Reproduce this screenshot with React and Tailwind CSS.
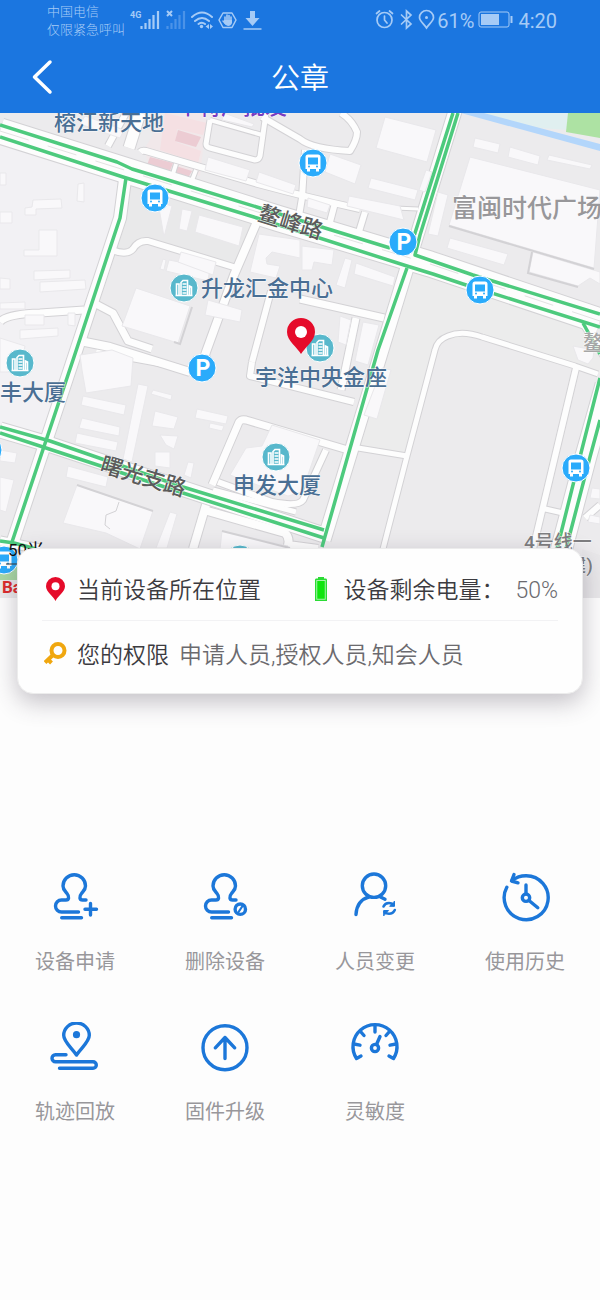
import React from 'react';

const roads = [
  // side streets, [path, width]
  ['M126 113 L108 146', 6],
  ['M140 113 L129 148', 11],
  ['M210 120 L206 144 Q206 147 210 148 L255 160 Q259 160 260 156 L266 113', 5],
  ['M210 120 L262 135', 4],
  ['M140 152 Q142 150 146 151 L258 184 Q310 198 360 209', 6],
  ['M176 164 L172 177', 4],
  ['M196 170 L191 183', 4],
  ['M262 117 L300 139 Q312 149 350 151 Q357 140 357 132 Q352 120 341 113', 6],
  ['M305 150 L302 198 L299 216', 6],
  ['M335 203 L330 222', 6],
  ['M365 212 L358 235', 6],
  ['M395 208 L418 209', 3],
  ['M112 250 Q127 256 133 249 Q138 240 148 241 L240 269', 6],
  ['M256 224 L234 275 L206 352 L200 372', 8],
  ['M271 291 L252 362', 6],
  ['M0 322 Q6 314 40 313 L84 310', 7],
  ['M94 303 L113 313 L128 341 L152 349', 7],
  ['M80 341 L110 347 L190 372', 8],
  ['M96 352 L178 367', 5],
  ['M300 299 L384 318', 7],
  ['M356 318 L341 390', 7],
  ['M252 362 L250 376 L354 402', 6],
  ['M212 485 L239 422 Q241 419 246 420 L348 450', 7],
  ['M218 482 L272 502 Q298 507 303 500 L326 450', 6],
  ['M213 490 L296 512', 5],
  ['M206 505 L193 549', 8],
  ['M204 510 L285 533 Q290 538 288 545 L318 549', 8],
  ['M352 447 L407 456', 5],
  ['M383 549 L407 456 L435 350 Q437 340 448 336 Q462 330 482 337 L575 366 L598 374', 5],
  ['M576 368 L533 549', 6],
  ['M541 508 L563 513', 5],
  ['M585 518 L600 505', 6],
];

const mainRoads = [
  ['M0 131 L118 168 L280 219 L430 264 L600 321', 25],
  ['M456 108 L410 258 L324 540', 13],
  ['M126 172 L120 218 L73 360 L10 550', 12],
  ['M0 430 L48 444 L324 535', 15],
  ['M606 385 L586 456 L560 555', 21],
  ['M582 320 L606 358', 8],
  ['M0 541 L40 549', 9],
];

const greenLines = [
  'M0 125 L117 162 L132 169 L260 208 L390 248',
  'M0 137 L123 177 L257 218 L407 266 L433 274 L463 284 L600 327',
  'M453 113 L415 233 L410 246',
  'M458 113 L420 235 L415 255 L473 275 L600 314',
  'M407 268 L378 350 L322 547',
  'M126 178 L120 218 L73 360 L12 542',
  'M0 427 L50 441 L102 459 L183 487 L324 530',
  'M0 433 L43 447 L183 493 L324 538',
  'M600 378 L581 453 L557 549',
  'M600 420 L590 457 L566 549',
  'M583 323 L600 354',
  'M0 541 L14 543 L36 549',
];

const buildings = [
  '0,173 6,173 6,185 0,185',
  '78,184 84,183 84,202 77,201',
  '33,200 61,199 62,208 36,209 36,215 25,215 25,208 32,207',
  '0,212 12,212 12,223 0,223',
  '39,230 57,230 57,256 24,256 24,250 39,250',
  '34,271 70,270 70,278 34,280',
  '40,282 85,280 86,289 40,292',
  '0,278 10,279 10,289 0,289',
  '0,303 25,302 25,309 0,309',
  '25,315 44,315 44,325 25,325',
  '68,313 75,313 75,326 68,325',
  '20,330 58,328 58,336 20,339',
  '0,338 25,346 20,372 0,372',
  '182,209 192,211 187,231 179,229',
  '199,215 243,227 239,246 195,232',
  '158,202 172,206 164,237',
  '163,259 166,260 164,270 160,269',
  '169,260 210,268 208,281 166,271',
  '181,252 216,262 213,275 178,262',
  '136,288 190,306 178,343 122,326',
  '208,300 242,310 240,322 205,315',
  '259,234 300,240 300,258 272,252 266,258 267,264 280,266 276,278 250,272',
  '302,246 334,250 332,265 314,262 312,270 302,270',
  '345,258 352,260 345,288 336,285',
  '356,263 395,277 393,286 354,274',
  '208,157 250,170 246,181 205,170',
  '259,172 296,185 293,194 256,182',
  '224,113 254,124 252,127 222,120',
  '85,116 124,130 120,138 80,124',
  '385,117 436,130 427,162 376,148',
  '330,154 361,165 355,184 325,172',
  '371,178 418,190 415,200 368,188',
  '349,196 400,206 404,220 347,206',
  '438,192 448,195 438,236 428,234',
  '426,170 432,172 425,192 419,190',
  '308,198 330,205 327,213 307,207',
  '475,138 500,144 498,153 473,147',
  '510,147 540,156 538,165 508,157',
  '549,155 592,165 590,169 547,160',
  '470,157 600,190 594,268 449,225',
  '450,238 508,254 504,265 447,248',
  '533,252 600,272 600,284 590,278 578,286 529,272',
  '573,346 594,350 593,358 588,364 578,360',
  '80,355 112,350 133,358 131,386 86,393 82,370',
  '83,396 126,405 124,415 81,405',
  '82,418 120,427 119,436 79,428',
  '77,433 118,442 116,451 75,443',
  '138,384 148,386 132,462 123,459',
  '153,390 172,395 171,400 151,394',
  '155,411 178,417 174,429 152,426',
  '160,435 178,436 174,449 166,445',
  '155,452 170,452 170,468 155,466',
  '197,409 228,416 226,424 195,418',
  '210,423 224,426 222,431 209,428',
  '188,462 194,463 191,478 184,475',
  '246,448 262,446 272,425 320,440 302,492 288,496 230,475',
  '77,485 153,511 140,549 106,533 63,523',
  '68,466 108,477 106,487 66,477',
  '170,512 177,514 167,548 156,548',
  '0,450 17,453 15,463 0,461',
  '0,477 14,480 6,512 0,510',
  '222,531 288,546 286,549 220,549',
  '340,316 351,320 346,345 338,342',
  '363,322 379,325 368,365 355,361',
  '382,368 391,370 377,419 364,415',
  '592,488 600,489 600,499 590,498',
  '590,515 600,517 600,524 588,522',
];

const BusStop = ({ x, y }) => (
  <g transform={`translate(${x} ${y})`}>
    <circle r="14" fill="#2aabfb" stroke="#fff" strokeWidth="1" />
    <path d="M-5 -8.500 H5 Q7.500 -8.500 7.500 -6 V6 H6 V8.500 H3 V6 H-3 V8.500 H-6 V6 H-7.500 V-6 Q-7.500 -8.500 -5 -8.500Z" fill="#fff" />
    <rect x="-5" y="-5.500" width="10" height="7" fill="#2aabfb" />
    <circle cx="-4" cy="3.500" r="1" fill="#2aabfb" />
    <circle cx="4" cy="3.500" r="1" fill="#2aabfb" />
  </g>
);

const Parking = ({ x, y }) => (
  <g transform={`translate(${x} ${y})`}>
    <circle r="14" fill="#2aabfb" stroke="#fff" strokeWidth="1" />
    <text x="1" y="8" textAnchor="middle" fontSize="23" fontWeight="700" fill="#fff">P</text>
  </g>
);

const Building = ({ x, y }) => (
  <g transform={`translate(${x} ${y})`}>
    <circle r="14" fill="#58b8cc" stroke="#fff" strokeWidth="1" />
    <path d="M-7.500 7 V-4 H-5 V7 M-3 7 V-5.500 L-1 -7.500 H3.500 V7 M5.500 7 V-2 L7.500 -1 V7 M-8.500 7.500 H8.500" fill="none" stroke="#fff" strokeWidth="1.600" />
    <path d="M-1.500 -4 H2.500 M-1.500 -1 H2.500 M-1.500 2 H2.500 M-1.500 5 H2.500" stroke="#fff" strokeWidth="1.400" />
  </g>
);

const mapLabel = {
  fontWeight: 500,
  stroke: '#ffffffcc',
  strokeWidth: 1,
  strokeLinejoin: 'round',
  paintOrder: 'stroke',
};

const DeviceMap = () => (
  <svg
    className="block h-[485px] w-full bg-[#ecebed]"
    viewBox="0 113 600 485"
    preserveAspectRatio="xMidYMin slice"
    role="img"
    aria-label="设备位置地图"
  >
    {/* land areas */}
    <path d="M126 178 L256 215 L234 270 L148 243 L133 252 L115 247Z" fill="#e9e9ea" />
    <path d="M0 140 L122 178 L118 218 L75 350 L48 440 L0 428Z" fill="#f2f1f4" />
    <path d="M407 268 L600 330 V374 L482 337 L440 340 L405 456 L350 447Z" fill="#ececec" />
    <path d="M145 148 L166 113 H207 L200 176 L147 160Z" fill="#f1e8ea" />
    <path d="M165 113 L207 123 L203 135 L177 129 L176 142 L201 151 L198 163 L160 150Z" fill="#f5e0e3" />
    <path d="M178 130 L201 137 L196 147 L175 141Z M150 157 L173 163 L170 171 L147 165Z M176 166 L192 171 L188 178 L173 174Z" fill="#ecccd3" />
    <path d="M470 113 H568 V130 L540 128Z" fill="#e0eff0" />
    <path d="M568 113 H600 V138 L566 132Z" fill="#ade2a3" />
    <path d="M461 113 H484 L600 144 V151Z" fill="#b3d6fb" />
    <path d="M0 556 H18 V580 H0Z" fill="#a9d8a4" />
    <path d="M582 549 L600 555 V598 H582Z" fill="#e9e8ea" />

    <g fill="none" strokeLinejoin="round">
      {roads.map(([d, w]) => <path key={d} d={d} stroke="#d3d2d5" strokeWidth={w + 2} />)}
      {mainRoads.map(([d, w]) => <path key={d} d={d} stroke="#d3d2d5" strokeWidth={w + 2} />)}
      {roads.map(([d, w]) => <path key={d} d={d} stroke="#fdfdfd" strokeWidth={w} />)}
      {mainRoads.map(([d, w]) => <path key={d} d={d} stroke="#fdfdfd" strokeWidth={w} />)}
    </g>
    <path d="M0 131 L118 168 L280 219 L430 264 L600 321" fill="none" stroke="#e2e2e2" strokeWidth="1" strokeDasharray="30 20" />

    <g fill="#f9f8fa" stroke="#e9e8eb" strokeWidth="1">
      {buildings.map((points) => <polygon key={points} points={points} />)}
    </g>
    <g fill="none" stroke="#d3d2d5" strokeWidth="2">
      <path d="M192 307 L180 344 L174 342" />
      <path d="M77 485 L153 511" />
      <path d="M532 252 L528 273 L578 287" />
      <path d="M449 226 L594 269" />
      <path d="M222 531 L290 548" />
      <path d="M119 502 L116 511 L106 515 L105 525 L110 529" strokeWidth="1" />
    </g>

    <g fill="none" stroke="#4dca7d" strokeWidth="3.500" strokeLinejoin="round">
      {greenLines.map((d) => <path key={d} d={d} />)}
    </g>

    <BusStop x={155} y={198} />
    <BusStop x={313} y={163} />
    <BusStop x={480} y={290} />
    <BusStop x={576} y={468} />
    <BusStop x={4} y={560} />
    <BusStop x={-12} y={450} />
    <Parking x={403} y={242} />
    <Parking x={202} y={368} />
    <Building x={184} y={288} />
    <Building x={20} y={363} />
    <Building x={320} y={348} />
    <Building x={276} y={457} />
    <Building x={240} y={559} />

    <g fontSize="22" fill="#4a6f94" style={mapLabel}>
      <text x="54" y="130">榕江新天地</text>
      <text x="201" y="296">升龙汇金中心</text>
      <text x="255" y="385">宇洋中央金座</text>
      <text x="0" y="400">丰大厦</text>
      <text x="233" y="493">申发大厦</text>
    </g>
    <text x="177" y="114" fontSize="22" fill="#7a3cc0" style={mapLabel}>本特产批发</text>
    <text x="452" y="217" fontSize="25" fill="#98979a" style={mapLabel}>富闽时代广场</text>
    <g fontSize="22" fill="#5b5b5b" style={mapLabel}>
      <text transform="translate(257 220) rotate(17)">鳌峰路</text>
      <text transform="translate(99 471) rotate(17)">曙光支路</text>
    </g>
    <text x="583" y="350" fontSize="21" fill="#a6a6a6" style={mapLabel}>鳌</text>
    <g fontSize="19" fill="#7e7e80" style={mapLabel}>
      <text x="524" y="549">4号线一</text>
      <text x="580" y="572" textAnchor="middle">建)</text>
    </g>

    {/* device marker */}
    <path d="M301 354 C297 347 287 341 287 332 A14 14 0 0 1 315 332 C315 341 305 347 301 354Z" fill="#e50b2a" />
    <circle cx="301" cy="332" r="6" fill="#fff" />

    {/* scale and vendor mark */}
    <text x="8" y="556" fontSize="17" fill="#111">50米</text>
    <path d="M6 564 H40" stroke="#333" strokeWidth="1" />
    <text x="2" y="593" fontSize="17" fontWeight="700" fill="#dd2a2c">Baidu</text>
  </svg>
);

const StatusBar = () => (
  <div className="flex h-10 items-center justify-between pl-[47px] pr-[43px] text-[#a6cbf6]">
    <div className="flex items-center">
      <div className="pt-0.5 text-[13px] leading-[18px] font-light">
        <p>中国电信</p>
        <p>仅限紧急呼叫</p>
      </div>
      <svg className="ml-1 h-[26px] w-[134px]" viewBox="129 7 134 26" fill="none" stroke="currentColor" aria-hidden="true">
        <text x="130" y="18" fontSize="9" fontWeight="700" fill="currentColor" stroke="none">4G</text>
        <path d="M141.500 29 V26 M145.500 29 V23 M149.500 29 V19 M153.500 29 V15 M158 29 V11" strokeWidth="2.200" />
        <path d="M167.500 29 V26 M171.500 29 V23 M175.500 29 V19 M179.500 29 V15 M184 29 V11" strokeWidth="2.200" opacity="0.350" />
        <path d="M167 11 L172 16 M172 11 L167 16" strokeWidth="2" />
        <path d="M192 17 Q202 8 212 17 M195 21 Q202 15 209 21 M198.500 24 Q202 21.500 205 24" strokeWidth="2" strokeLinecap="round" />
        <circle cx="201.500" cy="26.500" r="1.700" fill="currentColor" stroke="none" />
        <path d="M209 24 L205.500 26.500 L209 29Z M210 24 L213 26.500 L210 29Z" fill="currentColor" stroke="none" />
        <path d="M223 13 H232 L236 20 L232 27.500 H223 L219 20Z" strokeWidth="1.500" strokeLinejoin="round" />
        <path d="M223 21 L225 23 V17 M227 20 V15 M229 20 V15.500 M231 20 V17" strokeWidth="1.600" strokeLinecap="round" />
        <path d="M224 20 H232 V23 Q231 26 228 26 Q226 26 224 23Z" fill="currentColor" stroke="none" />
        <path d="M250 11 H255 V18 H259.500 L252.500 26 L245.500 18 H250Z" fill="currentColor" stroke="none" />
        <path d="M243.500 29 H261.500" strokeWidth="1.500" />
      </svg>
    </div>
    <div className="flex items-center">
      <svg className="h-[22px] w-[60px]" viewBox="375 10 60 22" fill="none" stroke="currentColor" strokeWidth="1.700" strokeLinecap="round" aria-hidden="true">
        <circle cx="384.500" cy="21" r="7.500" />
        <path d="M384.500 17 V21 L387 24 M376.500 14.500 L379.500 12 M392.500 14.500 L389.500 12" />
        <path d="M401.500 16 L411 25 L406.500 29 V12 L411 16 L401.500 25" />
        <path d="M426.500 29 C424 25 419.500 22 419.500 18.500 A7 7 0 0 1 433.500 18.500 C433.500 22 429 25 426.500 29Z" />
        <circle cx="426.500" cy="18.500" r="1.500" fill="currentColor" stroke="none" />
      </svg>
      <span className="ml-0.5 pt-0.5 text-xl leading-6">61%</span>
      <svg className="ml-1 h-[18px] w-[36px]" viewBox="0 0 36 18" fill="none" stroke="currentColor" aria-hidden="true">
        <rect x="1" y="1" width="30" height="15" rx="2" />
        <rect x="3" y="3" width="18" height="11" fill="currentColor" stroke="none" />
        <path d="M33.500 5 V12" strokeWidth="2" />
      </svg>
      <span className="ml-1 pt-0.5 text-xl leading-6">4:20</span>
    </div>
  </div>
);

const stamp = (
  <>
    <path d="M36 28 H32.500 C29.500 28 29 24.500 31.500 21.500 C33.500 19 35.500 17.500 35.500 14 A11.250 11.250 0 0 0 13 14 C13 17.500 15 19 17 21.500 C19.500 24.500 19 28 16 28 H11.500 A6 6 0 0 0 11.500 40 H28.500" />
    <path d="M11.700 45.700 H31.500" />
  </>
);

const actions = [
  {
    label: '设备申请',
    icon: (
      <>
        {stamp}
        <path d="M40.500 31.500 V43 M35 37.300 H46.500" />
      </>
    ),
  },
  {
    label: '删除设备',
    icon: (
      <>
        {stamp}
        <circle cx="40.300" cy="37.200" r="5.200" />
        <path d="M38.500 40 L42.200 34.500" strokeWidth="2.200" />
      </>
    ),
  },
  {
    label: '人员变更',
    icon: (
      <>
        <circle cx="24" cy="13.700" r="11.700" />
        <path d="M6 42.500 C6.500 33 11.500 27 19.300 24.900 M30.500 24.900 L35 27.200" />
        <path d="M33.500 34.500 Q35 31 39 31 Q41.500 31 43.500 33 M44.800 38 Q43 41.800 39 41.800 Q36.500 41.800 34.500 39.800" strokeWidth="2.600" />
        <path d="M44.500 29.500 V34.300 H40Z M33.700 43.500 V38.500 H38.200Z" fill="currentColor" strokeWidth="1" />
      </>
    ),
  },
  {
    label: '使用历史',
    icon: (
      <>
        <path d="M6.800 15.300 A22 22 0 1 0 26 3.700 Q18 3.700 12 8.500" />
        <path d="M14 2.500 L11.500 9 L18 10.800" />
        <circle cx="26" cy="25.700" r="3.700" />
        <path d="M26 13 V21.500 M29 28.500 L37.800 35.700" />
      </>
    ),
  },
  {
    label: '轨迹回放',
    icon: (
      <>
        <path d="M26.500 33 C22 26 13.700 20 13.700 13.300 A12.800 12.300 0 0 1 39.300 13.300 C39.300 20 31 26 26.500 33Z" />
        <circle cx="26.500" cy="12.700" r="3.600" fill="currentColor" stroke="none" />
        <path d="M16 32.700 H5.500 A3.500 3.500 0 0 0 5.500 39.700 H43 A3.300 3.300 0 0 1 43 46.300 H9.500" />
      </>
    ),
  },
  {
    label: '固件升级',
    icon: (
      <>
        <circle cx="25" cy="25.700" r="22" />
        <path d="M25 36.500 V15.500 M15.300 25.800 L25 15.500 L34.700 25.800" />
      </>
    ),
  },
  {
    label: '灵敏度',
    icon: (
      <>
        <path d="M11 34 L6.500 36.500 A22 22 0 1 1 43.500 36.500 L39 34" />
        <path d="M25 4 V10 M10.500 9.500 L14 13.500 M39.500 9.500 L36 13.500 M4 22 L10 23.200 M46 22 L40 23.200" />
        <circle cx="25" cy="26" r="3.600" />
        <path d="M26.500 22.500 L30 14.500" />
      </>
    ),
  },
];

const App = () => {
  return (
    <div className="min-h-screen bg-[#fdfdfd] font-['Roboto','Noto_Sans_CJK_SC',sans-serif]">
      <header className="bg-[#1b76e0]">
        <StatusBar />
        <div className="grid h-[73px] grid-cols-3 items-center">
          <button type="button" aria-label="返回" className="ml-6 flex size-9 items-center justify-center text-white">
            <svg className="size-9" viewBox="0 0 36 36" fill="none" stroke="currentColor" strokeWidth="3.500" strokeLinecap="round" strokeLinejoin="round">
              <path d="M26 3 L10.500 18 L26 33" />
            </svg>
          </button>
          <h1 className="pt-1 text-center text-[29px] leading-9 font-[350] text-white">公章</h1>
        </div>
      </header>

      <main>
        <DeviceMap />

        {/* Device info */}
        <section className="relative mx-[17px] -mt-[50px] rounded-2xl border border-[#ececec] bg-[#fefefe] px-6 py-2 text-[23px] leading-8 shadow-[0_8px_24px_rgba(60,50,70,0.3)]">
          <div className="flex h-16 items-center justify-between border-b border-[#f2f2f4]">
            <div className="flex items-center gap-3 text-[#3c3b40]">
              <svg className="ml-1 h-6 w-[19px]" viewBox="0 0 19 24" aria-hidden="true">
                <path d="M9.500 24 C7 19 0 15 0 9.300 A9.500 9.300 0 0 1 19 9.300 C19 15 12 19 9.500 24Z" fill="#e50b2a" />
                <circle cx="9.500" cy="9.300" r="4" fill="#fff" />
              </svg>
              <span className="pt-1 font-[350]">当前设备所在位置</span>
            </div>
            <div className="flex items-center text-[#3c3b40]">
              <svg className="mr-4 h-6 w-3" viewBox="0 0 12 24" aria-hidden="true">
                <path d="M3 0 H9 V1.500 H11 Q12 1.500 12 3 V24 H0 V3 Q0 1.500 1 1.500 H3Z" fill="#2bdb35" />
                <rect x="1.800" y="3.500" width="8.400" height="18.700" fill="#0ee50e" stroke="#c9f8ca" strokeWidth="0.800" />
              </svg>
              <span className="pt-1 font-[350]">设备剩余电量：</span>
              <span className="ml-[11px] pt-1 font-[350] text-[#6b6a6e]">50%</span>
            </div>
          </div>
          <div className="flex h-16 items-center">
            <svg className="mr-2.5 ml-0.5 size-[23px]" viewBox="0 0 23 23" fill="none" stroke="#f0a70f" aria-hidden="true">
              <circle cx="14" cy="8.500" r="6.500" strokeWidth="4" />
              <path d="M9.500 12.500 L1 20.500 M4 17.500 L7.500 21" strokeWidth="4" />
            </svg>
            <span className="pt-1.5 font-[350] text-[#3c3b40]">您的权限</span>
            <span className="ml-2.5 pt-1.5 font-[350] text-[#6b6a6e]">申请人员,授权人员,知会人员</span>
          </div>
        </section>

        {/* Actions */}
        <nav className="mt-[178px] grid grid-cols-4 gap-y-11 pb-12">
          {actions.map((action) => (
            <button key={action.label} type="button" className="flex flex-col items-center gap-6">
              <svg
                className="size-[50px] text-[#1c77d9]"
                viewBox="0 0 50 50"
                fill="none"
                stroke="currentColor"
                strokeWidth="3.400"
                strokeLinecap="round"
                strokeLinejoin="round"
                aria-hidden="true"
              >
                {action.icon}
              </svg>
              <span className="text-xl leading-8 text-[#98979b]">{action.label}</span>
            </button>
          ))}
        </nav>
      </main>
    </div>
  );
};

export default App;
